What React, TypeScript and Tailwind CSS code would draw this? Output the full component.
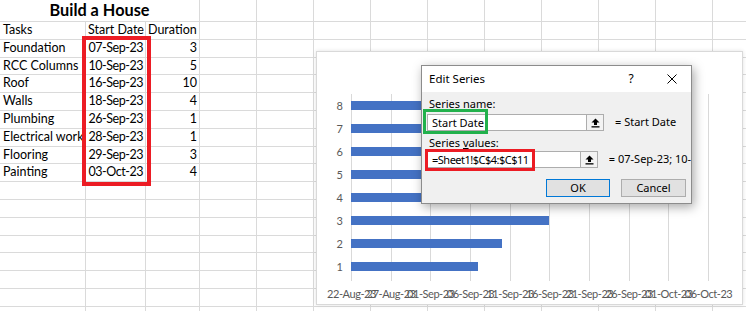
import React from 'react';

const tasks = [
  { name: 'Foundation', start: '07-Sep-23', days: 16, dur: 3 },
  { name: 'RCC Columns', start: '10-Sep-23', days: 19, dur: 5 },
  { name: 'Roof', start: '16-Sep-23', days: 25, dur: 10 },
  { name: 'Walls', start: '18-Sep-23', days: 27, dur: 4 },
  { name: 'Plumbing', start: '26-Sep-23', days: 35, dur: 1 },
  { name: 'Electrical work', start: '28-Sep-23', days: 37, dur: 1 },
  { name: 'Flooring', start: '29-Sep-23', days: 38, dur: 3 },
  { name: 'Painting', start: '03-Oct-23', days: 42, dur: 4 },
];

const axisLabels = [
  '22-Aug-23', '27-Aug-23', '01-Sep-23', '06-Sep-23', '11-Sep-23',
  '16-Sep-23', '21-Sep-23', '26-Sep-23', '01-Oct-23', '06-Oct-23',
];

const STEP = 39.67; // px per 5 days
const EXTRA_COLS = 10;
const EMPTY_ROWS = 8;

const Cell: React.FC<{ children?: React.ReactNode; right?: boolean; className?: string }> = ({ children, right, className }) => (
  <div
    className={`border-r border-b border-[#dadada] px-[2px] flex items-center overflow-hidden whitespace-nowrap ${
      right ? 'justify-end' : ''
    } ${className ?? ''}`}
  >
    {children}
  </div>
);

const CollapseIcon = () => (
  <svg width="9" height="10" viewBox="0 0 9 10">
    <path d="M4.5 0.5 L8.5 4.5 L6 4.5 L6 7 L3 7 L3 4.5 L0.5 4.5 Z" fill="#000" />
    <rect x="0.5" y="8.2" width="8" height="1.3" fill="#000" />
  </svg>
);

const Sheet = () => (
  <div className="grid grid-cols-[86px_60px_54px_repeat(10,57px)] grid-rows-[22px] auto-rows-[17.8px] text-[12.5px] text-black">
    {/* title row */}
    <div className="col-span-3 border-r border-b border-[#dadada] flex items-center justify-center font-bold text-[16.3px]">
      Build a House
    </div>
    {Array.from({ length: EXTRA_COLS }).map((_, i) => <Cell key={`t${i}`} />)}

    {/* header */}
    <Cell className="pl-[3px]">Tasks</Cell>
    <Cell>Start Date</Cell>
    <Cell>Duration</Cell>
    {Array.from({ length: EXTRA_COLS }).map((_, i) => <Cell key={`h${i}`} />)}

    {tasks.map((t) => (
      <React.Fragment key={t.name}>
        <Cell className="pl-[3px]">{t.name}</Cell>
        <Cell right className="tracking-[-0.45px]">{t.start}</Cell>
        <Cell right>{t.dur}</Cell>
        {Array.from({ length: EXTRA_COLS }).map((_, i) => <Cell key={i} />)}
      </React.Fragment>
    ))}

    {Array.from({ length: EMPTY_ROWS }).map((_, r) => (
      <React.Fragment key={`e${r}`}>
        {Array.from({ length: EXTRA_COLS + 3 }).map((_, i) => <Cell key={i} />)}
      </React.Fragment>
    ))}
  </div>
);

const Chart = () => (
  <div className="absolute left-[316px] top-[51px] w-[427px] h-[254px] bg-white border border-[#d9d9d9] shadow-[0_0_4px_rgba(0,0,0,0.12)] pl-[34px] pt-[42px] text-[11px] text-[#595959]">
    <div className="relative w-[357px] h-[184px]">
      {axisLabels.map((label, i) => (
        <React.Fragment key={label}>
          <div className="absolute top-0 bottom-[-3px] w-px bg-[#d9d9d9]" style={{ left: i * STEP }} />
          <div
            className="absolute top-[193px] -translate-x-1/2 whitespace-nowrap leading-[14px] tracking-[-0.45px]"
            style={{ left: i * STEP + 0.5 }}
          >
            {label}
          </div>
        </React.Fragment>
      ))}
      <div className="relative flex flex-col-reverse h-full">
        {tasks.map((t, i) => (
          <div key={t.name} className="relative h-[23px] flex items-center">
            <span className="absolute right-full mr-[8px] leading-[14px]">{i + 1}</span>
            <div className="h-[9px] bg-[#4472c4]" style={{ width: t.days * (STEP / 5) }} />
          </div>
        ))}
      </div>
    </div>
  </div>
);

const Dialog = () => (
  <div className="absolute left-[421px] top-[65px] w-[271px] h-[139px] border border-[#8c8c8c] shadow-[2px_3px_10px_rgba(0,0,0,0.35)] flex flex-col text-[11px] text-black font-['Noto_Sans',sans-serif]">
    <div className="h-[26px] bg-white flex items-center pl-[7px] pr-[9px]">
      <span className="text-[11.5px]">Edit Series</span>
      <span className="ml-auto w-[20px] text-center text-[12px]">?</span>
      <span className="ml-[20px] w-[21px] flex justify-center">
        <svg width="10" height="10" viewBox="0 0 10 10">
          <path d="M0.5 0.5 L9.5 9.5 M9.5 0.5 L0.5 9.5" stroke="#000" strokeWidth="1" />
        </svg>
      </span>
    </div>
    <div className="flex-1 bg-[#f0f0f0] flex flex-col">
      <div className="mt-[5px] pl-[7px] h-[14px] leading-[14px]">Series name:</div>
      <div className="mt-[3px] flex items-center pl-[5px]">
        <div className="w-[160px] h-[17px] bg-white border border-[#adadad] flex items-center pl-[4px] leading-[15px]">
          Start Date<span className="w-px h-[12px] bg-black ml-[1px]" />
        </div>
        <div className="w-[17px] h-[17px] bg-[#f3f3f3] border border-l-0 border-[#adadad] flex items-center justify-center">
          <CollapseIcon />
        </div>
        <span className="ml-[11px] whitespace-nowrap">= Start Date</span>
      </div>
      <div className="mt-[5px] pl-[7px] h-[14px] leading-[14px]">
        Series <span className="underline">v</span>alues:
      </div>
      <div className="mt-[1px] flex items-center pl-[5px]">
        <div className="w-[160px] h-[17px] bg-white border border-[#adadad] flex items-center pl-[4px] leading-[15px] tracking-[-0.5px] whitespace-nowrap">
          =Sheet1!$C$4:$C$11
        </div>
        <div className="w-[17px] h-[17px] bg-[#f3f3f3] border border-l-0 border-[#adadad] flex items-center justify-center">
          <CollapseIcon />
        </div>
        <span className="ml-[11px] whitespace-nowrap overflow-hidden">= 07-Sep-23; 10-.</span>
      </div>
      <div className="mt-[11px] flex pl-[124px] gap-[11px]">
        <div className="w-[64px] h-[18px] bg-[#e1e1e1] border border-[#0078d7] flex items-center justify-center">OK</div>
        <div className="w-[65px] h-[18px] bg-[#e1e1e1] border border-[#adadad] flex items-center justify-center">Cancel</div>
      </div>
    </div>
    {/* annotation boxes */}
    <div className="absolute left-[1px] top-[43px] w-[65px] h-[25px] border-[3px] border-[#22b14c]" />
    <div className="absolute left-[3px] top-[83px] w-[110px] h-[22px] border-[3px] border-[#ec1c24]" />
  </div>
);

export default function App() {
  return (
    <div className="relative w-[746px] h-[311px] overflow-hidden bg-white font-['Lato',sans-serif]">
      <Sheet />
      {/* highlight around start dates */}
      <div className="absolute left-[82px] top-[36px] w-[69px] h-[150px] border-4 border-[#ec1c24]" />
      <Chart />
      <Dialog />
    </div>
  );
}
